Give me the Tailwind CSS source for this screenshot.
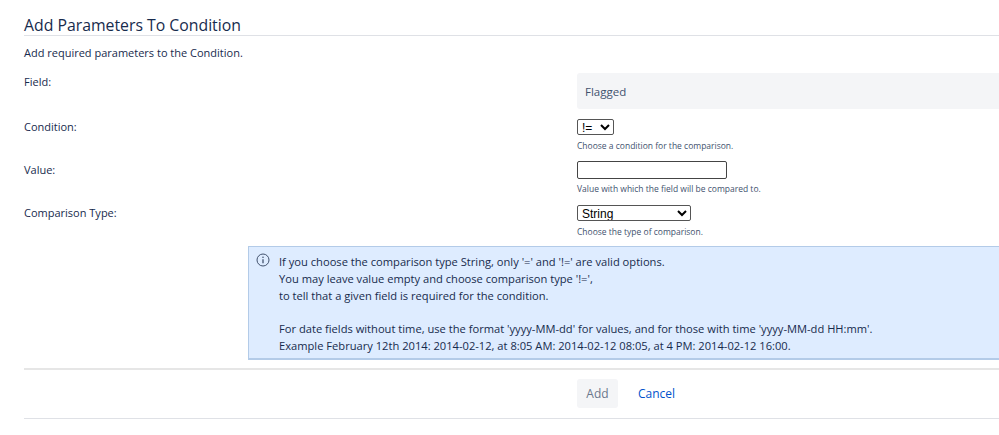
<!DOCTYPE html>
<html lang="en">
<head>
  <meta charset="UTF-8">
  <title>Add Parameters To Condition</title>
  <script src="https://cdn.jsdelivr.net/npm/@tailwindcss/browser@4"></script>
</head>
<body class="bg-white h-[435px] overflow-hidden font-['Open_Sans',sans-serif] text-[11px] text-[#172b4d]">
  <div class="pl-6 pt-[16px]">
    <h2 class="h-[19px] leading-[19px] text-[15.8px] font-medium border-b border-[#dfe1e6] box-content text-[#172b4d]">Add Parameters To Condition</h2>
    <p class="mt-[9px] h-4 leading-4">Add required parameters to the Condition.</p>

    <div class="mt-[12px] grid grid-cols-[553px_1fr] h-[36px]">
      <label class="leading-4 pt-[1px]">Field:</label>
      <div class="bg-[#f4f5f7] rounded-l-[3px] pl-2 flex items-center text-[11.5px] text-[#42526e] pt-[1px]">Flagged</div>
    </div>

    <div class="mt-[10px] grid grid-cols-[553px_1fr]">
      <label class="leading-4">Condition:</label>
      <div>
        <select class="block w-[37px] h-[16px] p-0 bg-white border border-[#555] rounded-[2px] text-[12px] leading-[14px] text-black font-['Liberation_Sans',sans-serif]"><option>!=</option></select>
        <p class="mt-[4px] h-[13px] leading-[13px] text-[8.5px] text-[#42526e]">Choose a condition for the comparison.</p>
      </div>
    </div>

    <div class="mt-[9px] grid grid-cols-[553px_1fr]">
      <label class="leading-4 pt-[1px]">Value:</label>
      <div>
        <input type="text" class="block w-[150px] h-[18px] bg-white border border-[#444] rounded-[2px]">
        <p class="mt-[3px] h-[13px] leading-[13px] text-[8.5px] text-[#42526e]">Value with which the field will be compared to.</p>
      </div>
    </div>

    <div class="mt-[10px] grid grid-cols-[553px_1fr]">
      <label class="leading-4">Comparison Type:</label>
      <div>
        <select class="block w-[114px] h-[16px] p-0 bg-white border border-[#555] rounded-[2px] text-[12px] leading-[14px] text-black font-['Liberation_Sans',sans-serif]"><option>String</option></select>
        <p class="mt-[4px] h-[13px] leading-[13px] text-[8.5px] text-[#42526e]">Choose the type of comparison.</p>
      </div>
    </div>

    <div class="ml-[224px] mt-[8px] h-[114px] bg-[#deecff] border border-b-2 border-[#b3cbe8] border-r-0 flex pl-[7px] pt-[7px]">
      <svg class="w-[14px] h-[14px] shrink-0 mt-[-1px]" viewBox="0 0 14 14" fill="none" stroke="#42526e">
        <circle cx="7" cy="7" r="6" stroke-width="1"/>
        <path d="M7 6.2v4" stroke-width="1.3"/>
        <circle cx="7" cy="4.2" r="0.8" fill="#42526e" stroke="none"/>
      </svg>
      <div class="ml-[9px] text-[11.15px] leading-[16.8px] text-[#172b4d]">
        <p>If you choose the comparison type String, only '=' and '!=' are valid options.</p>
        <p>You may leave value empty and choose comparison type '!=',</p>
        <p>to tell that a given field is required for the condition.</p>
        <p class="mt-[16.8px]">For date fields without time, use the format 'yyyy-MM-dd' for values, and for those with time 'yyyy-MM-dd HH:mm'.</p>
        <p>Example February 12th 2014: 2014-02-12, at 8:05 AM: 2014-02-12 08:05, at 4 PM: 2014-02-12 16:00.</p>
      </div>
    </div>

    <div class="mt-[8px] h-[51px] border-t-2 border-b border-t-[#e6e6e6] border-b-[#dfe1e6] pl-[553px] pt-[9px] flex items-start">
      <button class="w-[41px] h-[29px] pt-[1px] bg-[#f4f5f7] rounded-[3px] text-[#6b778c] text-[12px]">Add</button>
      <a class="ml-[20px] h-[29px] pt-[1px] flex items-center text-[12px] text-[#0052cc]">Cancel</a>
    </div>
  </div>
</body>
</html>
